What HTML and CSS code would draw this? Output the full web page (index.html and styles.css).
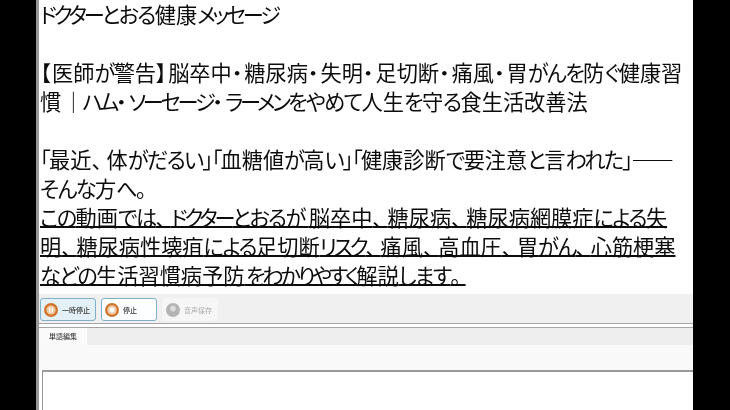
FILE: index.html
```html
<!DOCTYPE html>
<html lang="ja">
<head>
<meta charset="utf-8">
<title>ドクターとおる健康メッセージ</title>
<link rel="stylesheet" href="styles.css">
</head>
<body>
<main class="app">
  <section class="text">
    <p><span class="k">ドクター</span><span class="h">とおる</span>健康<span class="k">メッセージ</span></p>
    <p class="blank"></p>
    <p><span class="b">【</span>医師<span class="h">が</span>警告<span class="b">】</span>脳卒中<span class="d">・</span>糖尿病<span class="d">・</span>失明<span class="d">・</span>足切断<span class="d">・</span>痛風<span class="d">・</span>胃<span class="h">がんを</span>防<span class="h">ぐ</span>健康習</p>
    <p>慣<span class="k"> ｜ </span><span class="k">ハム</span><span class="d">・</span><span class="k">ソーセージ</span><span class="d">・</span><span class="k">ラーメン</span><span class="h">をやめて</span>人生<span class="h">を</span>守<span class="h">る</span>食生活改善法</p>
    <p class="blank"></p>
    <p><span class="h">「</span>最近<span class="c">、</span>体<span class="h">がだるい」「</span>血糖値<span class="h">が</span>高<span class="h">い」「</span>健康診断<span class="h">で</span>要注意<span class="h">と</span>言<span class="h">われた」</span><span class="b">——</span></p>
    <p><span class="h">そんな</span>方<span class="h">へ</span>。</p>
    <p><u><span class="h">この</span>動画<span class="h">では</span><span class="c">、</span><span class="k">ドクター</span><span class="h">とおるが </span>脳卒中<span class="c">、</span>糖尿病<span class="c">、</span>糖尿病網膜症<span class="h">による</span>失</u></p>
    <p><u>明<span class="c">、</span>糖尿病性壊疽<span class="h">による</span>足切断<span class="k">リスク</span><span class="c">、</span>痛風<span class="c">、</span>高血圧<span class="c">、</span>胃<span class="h">がん</span><span class="c">、</span>心筋梗塞</u></p>
    <p><u><span class="h">などの</span>生活習慣病予防<span class="k"> をわかりやすく</span>解説<span class="h">します</span><span class="c">。</span></u></p>
  </section>
  <div class="toolbar">
    <button class="btn btn-active"><span class="ico"><svg viewBox="0 0 16 16"><circle cx="8" cy="8" r="7" fill="#d2742f"/><circle cx="8" cy="8" r="4.6" fill="#eec9a4"/><rect x="6" y="5.5" width="1.3" height="5" fill="#fff"/><rect x="8.7" y="5.5" width="1.3" height="5" fill="#fff"/></svg></span>一時停止</button>
    <button class="btn"><span class="ico"><svg viewBox="0 0 16 16"><circle cx="8" cy="8" r="7" fill="#d2742f"/><circle cx="8" cy="8" r="4.8" fill="#eec9a4"/><rect x="5.7" y="5.7" width="4.6" height="4.6" fill="#fff"/></svg></span>停止</button>
    <button class="btn btn-off"><span class="ico"><svg viewBox="0 0 16 16"><circle cx="8" cy="8" r="7" fill="#b4b4b4"/><circle cx="8" cy="6.6" r="2.8" fill="#dedede"/></svg></span>音声保存</button>
  </div>
  <div class="tabs"><div class="tab">単語編集</div></div>
  <div class="panel"></div>
  <div class="editor"></div>
</main>
</body>
</html>
```
FILE: styles.css
```css
html, body {
  margin: 0;
  height: 100%;
  background: #000;
}
body {
  display: flex;
  height: 410px;
  overflow: hidden;
  padding-left: 36px;
  box-sizing: border-box;
}
.app {
  width: 657px;
  height: 410px;
  box-sizing: border-box;
  border-left: 3px solid #989898;
  background: #fff;
  display: flex;
  flex-direction: column;
  font-family: "Noto Sans CJK JP", "Noto Sans", sans-serif;
  filter: blur(0.35px);
}
.text {
  height: 294px;
  box-sizing: border-box;
  padding: 0 0 0 1px;
  font-size: 21.2px;
  line-height: 27px;
  color: #0c0c0c;
  white-space: nowrap;
}
.text p {
  margin: 0;
  height: 29px;
}
.text .k {
  font-feature-settings: "palt";
  letter-spacing: -3.2px;
}
.text .h {
  font-feature-settings: "palt";
  letter-spacing: -1.6px;
  word-spacing: 1px;
}
.text .d {
  font-feature-settings: "palt";
  letter-spacing: 2px;
}
.text .b {
  font-feature-settings: "palt";
  letter-spacing: 1.5px;
}
.text .c {
  letter-spacing: -6px;
}
.text u {
  text-decoration-thickness: 2px;
  text-underline-offset: 0;
  text-decoration-skip-ink: none;
}
.toolbar {
  height: 25px;
  background: #f0f0f0;
  border-bottom: 1px solid #a5a5a5;
  display: flex;
  gap: 5px;
  padding: 4px 0 0 1px;
}
.btn {
  width: 56px;
  height: 23px;
  box-sizing: border-box;
  border: 1px solid #7fb0c8;
  border-radius: 3px;
  background: #fdfeff;
  display: flex;
  align-items: center;
  gap: 3px;
  padding: 0 0 0 2px;
  font-family: inherit;
  font-size: 7px;
  font-weight: 500;
  color: #333;
}
.btn-active { background: #e3f0f6; }
.btn-off {
  border-color: #f5f5f5;
  background: #f6f6f6;
  color: #b5b5b5;
}
.ico, .ico svg {
  width: 16px;
  height: 16px;
  display: block;
}
.tabs {
  margin-top: 3px;
  height: 18px;
  background: #eeeeee;
  border-top: 1px solid #a5a5a5;
  box-sizing: border-box;
}
.tab {
  width: 48px;
  height: 17px;
  background: #fafafa;
  font-size: 7px;
  font-weight: 500;
  line-height: 17px;
  text-align: center;
  color: #444;
}
.panel {
  height: 25px;
  background: #f9f9f9;
}
.editor {
  flex: 1;
  margin-left: 3px;
  background: #fff;
  border-top: 2px solid #9a9a9a;
  border-left: 1px solid #9a9a9a;
}
```
